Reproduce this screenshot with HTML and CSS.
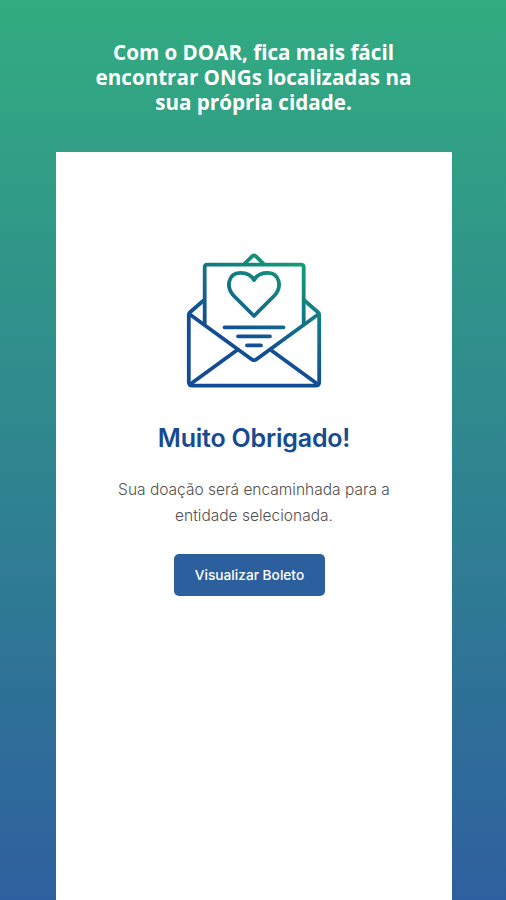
FILE: index.html
```html
<!DOCTYPE html>
<html lang="pt-BR">
<head>
    <meta charset="UTF-8">
    <meta name="viewport" content="width=device-width, initial-scale=1.0">
    <title>DOAR</title>
    <link rel="stylesheet" href="styles.css">
</head>
<body>
    <h1 class="headline">Com o DOAR, fica mais fácil<br>encontrar ONGs localizadas na<br>sua própria cidade.</h1>
    <main class="screen">
        <svg class="letter-icon" viewBox="0 0 160 150" aria-hidden="true">
            <defs>
                <linearGradient id="letterGradient" gradientUnits="userSpaceOnUse" x1="77" y1="118" x2="129" y2="20">
                    <stop offset="0" stop-color="#124c95"/>
                    <stop offset="0.15" stop-color="#124f94"/>
                    <stop offset="0.6" stop-color="#127a84"/>
                    <stop offset="1" stop-color="#159c72"/>
                </linearGradient>
            </defs>
            <g fill="none" stroke="url(#letterGradient)" stroke-width="3.8" stroke-linecap="round" stroke-linejoin="round">
                <!-- Envelope -->
                <path d="M28.5 55.5L15 67.2Q13.8 68.2 13.8 70V137Q13.8 140.6 17.4 140.6H140.6Q144.2 140.6 144.2 137V70Q144.2 68.2 143 67.2L129.5 55.5"/>
                <path d="M15 69.5L76.5 114.3Q79 116.2 81.5 114.3L143 69.5"/>
                <path d="M15.5 139L61.5 105.5M142.5 139L96.5 105.5"/>
                <!-- Carta -->
                <path d="M29.7 79V22.2Q29.7 19.6 32.3 19.6H126.1Q128.7 19.6 128.7 22.2V79"/>
                <path d="M69.8 18.5L77 11.4Q79 9.6 81 11.4L88.2 18.5"/>
                <!-- Coração -->
                <path d="M79 71L58.5 50.5C50.5 41.5 53.5 28.3 65 27.9C72.5 27.7 76.5 30.5 79 35C81.5 30.5 85.5 27.7 93 27.9C104.5 28.3 107.5 41.5 99.5 50.5Z"/>
                <path d="M49.5 82.3H108.5M63 91.3H95M72 100.4H86"/>
            </g>
        </svg>
        <h2 class="title">Muito Obrigado!</h2>
        <p class="message">Sua doação será encaminhada para a<br>entidade selecionada.</p>
        <button class="button" type="button">Visualizar Boleto</button>
    </main>
</body>
</html>
```

FILE: styles.css
```css
* {
    box-sizing: border-box;
}
body {
    margin: 0;
    height: 100vh;
    display: flex;
    flex-direction: column;
    align-items: center;
    overflow: hidden;
    background: linear-gradient(to bottom, #32ac80, #2f868f 50%, #2e609f);
    font-family: Inter, sans-serif;
}
.headline {
    margin: 0 0 0 1px;
    padding-top: 39.5px;
    height: 152px;
    flex-shrink: 0;
    color: #fff;
    font-family: "Open Sans", sans-serif;
    font-size: 20.6px;
    font-weight: 700;
    line-height: 25px;
    text-align: center;
}
.screen {
    width: 396px;
    margin-left: 2px;
    flex: 1;
    display: flex;
    flex-direction: column;
    align-items: center;
    padding-top: 93px;
    background: #fff;
}
.letter-icon {
    width: 160px;
    height: 150px;
    margin-left: 2px;
    flex-shrink: 0;
}
.title {
    margin: 27px 0 0;
    color: #164a91;
    font-size: 25px;
    font-weight: 620;
    line-height: 32px;
    letter-spacing: -0.2px;
}
.message {
    margin: 23px 0 0;
    color: #505050;
    font-size: 15.5px;
    font-weight: 300;
    line-height: 26px;
    text-align: center;
}
.button {
    width: 151px;
    height: 42px;
    margin: 25px 9px 0 0;
    padding: 0;
    border: none;
    border-radius: 5px;
    background: #2c5f9e;
    color: #fff;
    font-family: inherit;
    font-size: 13.7px;
    font-weight: 500;
}
```
